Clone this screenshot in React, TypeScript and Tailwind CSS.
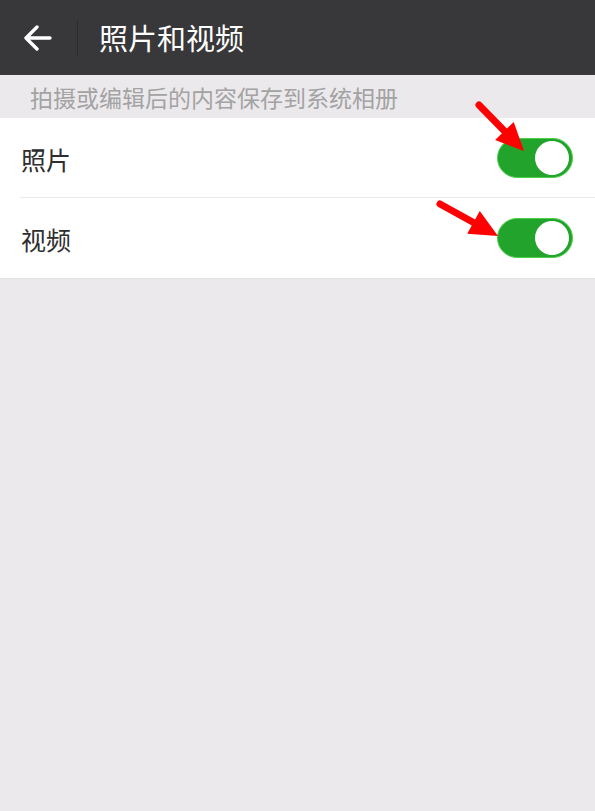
import React from "react";

const font = { fontFamily: '"Noto Sans CJK SC", "Noto Sans", sans-serif' };

function Toggle() {
  return (
    <div className="flex h-[40px] w-[76px] items-center justify-end rounded-full border border-[#4fd04a] bg-[#22a32c] p-[3px]">
      <div className="h-[34px] w-[34px] rounded-full bg-white" />
    </div>
  );
}

function Row({ label, last }: { label: string; last?: boolean }) {
  return (
    <div className="pl-[20px]">
      <div
        className={
          "flex h-[80px] items-center justify-between pr-[22px] " +
          (last ? "" : "border-b border-[#e9e8ea]")
        }
      >
        <span className="pl-[1px] pt-[3px] text-[25px] leading-none text-[#2e2e2e]">{label}</span>
        <Toggle />
      </div>
    </div>
  );
}

function Arrow({ x1, y1, x2, y2 }: { x1: number; y1: number; x2: number; y2: number }) {
  const dx = x2 - x1;
  const dy = y2 - y1;
  const len = Math.hypot(dx, dy);
  const ux = dx / len;
  const uy = dy / len;
  const head = 28;
  const hw = 13;
  const bx = x2 - ux * head;
  const by = y2 - uy * head;
  const px = -uy;
  const py = ux;
  return (
    <g>
      <line x1={x1} y1={y1} x2={bx} y2={by} stroke="#ff0000" strokeWidth={7} strokeLinecap="round" />
      <polygon
        points={`${x2},${y2} ${bx + px * hw},${by + py * hw} ${bx - px * hw},${by - py * hw}`}
        fill="#ff0000"
      />
    </g>
  );
}

export default function App() {
  return (
    <div className="relative h-[811px] w-[595px] bg-[#ebe9ec]" style={font}>
      <div className="flex h-[75px] items-center bg-[#38383b]">
        <div className="flex w-[77px] justify-center pr-[2px]">
          <svg width="28" height="26" viewBox="0 0 28 26" fill="none">
            <path d="M26 13H3M13 2L2 13l11 11" stroke="#fff" strokeWidth="3.4" strokeLinecap="round" strokeLinejoin="round" />
          </svg>
        </div>
        <div className="h-[36px] w-px bg-[#2c2c2e]" />
        <span className="pl-[21px] text-[29px] leading-none text-white">照片和视频</span>
      </div>
      <div className="flex h-[43px] items-center pl-[30px] pt-[1px] text-[23px] leading-none text-[#a3a3a3]">
        拍摄或编辑后的内容保存到系统相册
      </div>
      <div className="bg-white">
        <Row label="照片" />
        <Row label="视频" last />
      </div>
      <div className="h-px bg-[#e2e1e3]" />
      <svg className="pointer-events-none absolute left-0 top-0" width="595" height="811">
        <Arrow x1={479} y1={105} x2={524} y2={151} />
        <Arrow x1={440} y1={204} x2={498} y2={236} />
      </svg>
    </div>
  );
}
